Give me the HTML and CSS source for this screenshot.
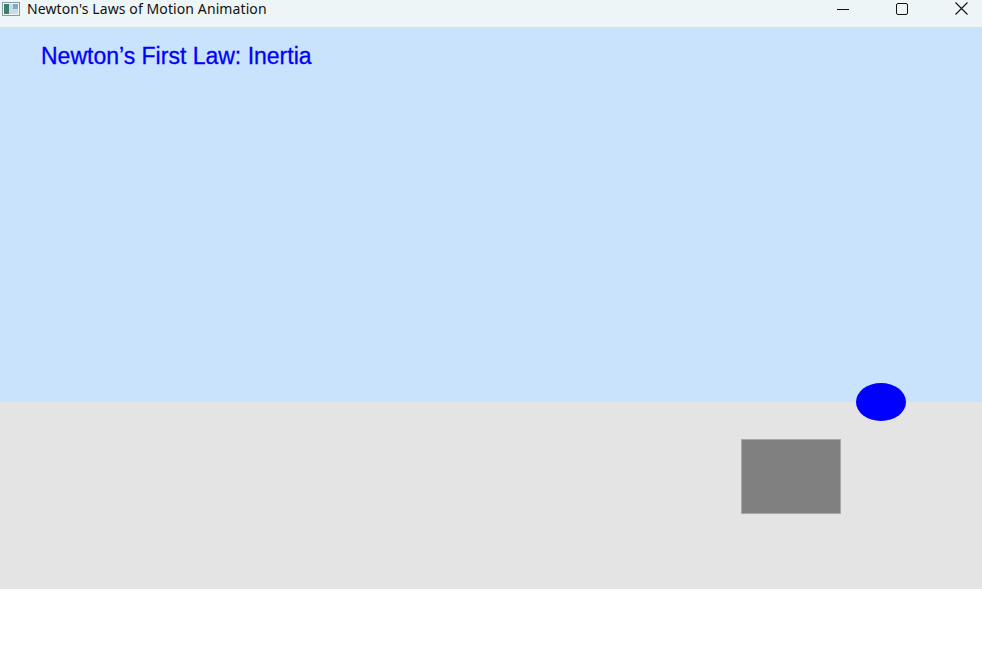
FILE: index.html
```html
<!DOCTYPE html>
<html>
<head>
<meta charset="utf-8">
<title>Newton's Laws of Motion Animation</title>
<link rel="stylesheet" href="styles.css">
</head>
<body>
<div class="window">
  <div class="titlebar">
    <div class="app">
      <svg class="app-icon" width="18" height="14" viewBox="0 0 18 14">
        <rect x="0.5" y="0.5" width="17" height="13" fill="#f4f7f8" stroke="#8a9aa6"/>
        <rect x="2" y="2" width="5" height="10" fill="#3f7f6a"/>
        <rect x="7" y="2" width="9" height="10" fill="#c9dbe6"/>
        <rect x="11" y="2" width="5" height="5" fill="#7fa9c4"/>
      </svg>
      <span class="app-title">Newton's Laws of Motion Animation</span>
    </div>
    <div class="controls">
      <div class="ctl"><svg width="12" height="12" viewBox="0 0 12 12"><path d="M0 6.5h12" stroke="#111" stroke-width="1"/></svg></div>
      <div class="ctl"><svg width="12" height="12" viewBox="0 0 12 12"><rect x="0.5" y="0.5" width="11" height="11" rx="1.5" fill="none" stroke="#111" stroke-width="1"/></svg></div>
      <div class="ctl"><svg width="13" height="13" viewBox="0 0 13 13"><path d="M0.5 0.5L12.5 12.5M12.5 0.5L0.5 12.5" stroke="#111" stroke-width="1.1"/></svg></div>
    </div>
  </div>
  <div class="canvas">
    <div class="sky">
      <h1 class="law">Newton’s First Law: Inertia</h1>
    </div>
    <div class="ground"></div>
    <div class="box"></div>
    <div class="ball"></div>
  </div>
</div>
</body>
</html>
```
FILE: styles.css
```css
html, body {
  margin: 0;
  padding: 0;
  background: #ffffff;
}
.window {
  width: 982px;
  height: 660px;
  background: #ffffff;
}
.titlebar {
  height: 27px;
  background: #edf5f6;
  display: flex;
  align-items: center;
  justify-content: space-between;
}
.app {
  display: flex;
  align-items: center;
  padding-left: 2px;
  gap: 7px;
  margin-top: -10px;
}
.app-icon {
  display: block;
}
.app-title {
  font-family: "Noto Sans", "Liberation Sans", sans-serif;
  font-size: 14px;
  color: #111;
  letter-spacing: 0.1px;
}
.controls {
  display: flex;
  align-self: flex-start;
  gap: 29px;
  padding-right: 6px;
  padding-top: 2px;
}
.ctl {
  width: 30px;
  height: 13px;
  display: flex;
  align-items: center;
  justify-content: center;
}
.canvas {
  position: relative;
  height: 562px;
}
.sky {
  height: 375px;
  background: #c9e3fc;
  padding-left: 41px;
  box-sizing: border-box;
  overflow: hidden;
}
.law {
  margin: 0;
  padding-top: 15px;
  font-family: "Liberation Sans", Arial, sans-serif;
  font-weight: normal;
  font-size: 23px;
  color: #0000ff;
  line-height: 28px;
  -webkit-text-stroke: 0.3px #0000ff;
}
.ground {
  height: 187px;
  background: #e4e4e4;
}
.box {
  position: absolute;
  left: 741px;
  top: 412px;
  width: 98px;
  height: 73px;
  background: #808080;
  border: 1px solid #a8a8a8;
}
.ball {
  position: absolute;
  left: 856px;
  top: 356px;
  width: 50px;
  height: 38px;
  border-radius: 50%;
  background: #0000ff;
}
```
